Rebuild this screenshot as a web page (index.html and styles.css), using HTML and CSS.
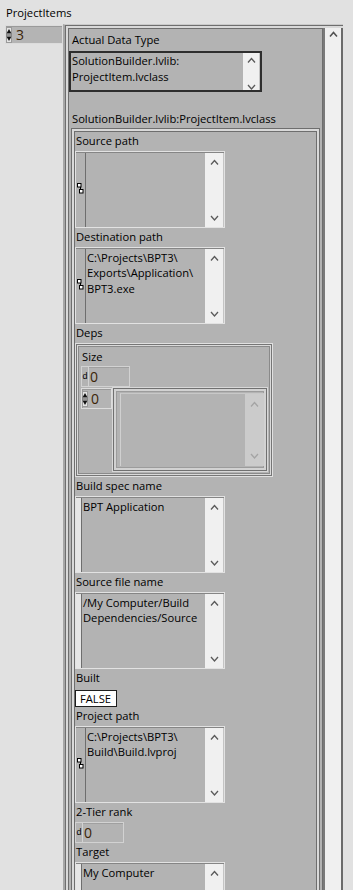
FILE: index.html
```html
<!DOCTYPE html>
<html>
<head>
<meta charset="utf-8">
<link rel="stylesheet" href="styles.css">
</head>
<body>
<div class="panel">
  <div class="title">ProjectItems</div>
  <div class="arr-row">
    <div class="idx idx-main">
      <svg class="spin" width="6" height="16" viewBox="0 0 6 16"><rect x="0.5" y="0.5" width="5" height="15" fill="#e4e4e4" stroke="#9a9a9a"/><path d="M3 2 L5.5 6.5 H0.5 Z" fill="#111"/><path d="M0.5 8 H5.5" stroke="#444"/><path d="M0.5 9.5 H5.5 L3 14 Z" fill="#111"/></svg>
      <span class="digit">3</span>
    </div>
    <div class="array">
      <div class="arr-view">
        <div class="cls">
          <div class="lbl cl">Actual Data Type</div>
          <div class="adt">
            <div class="txt">SolutionBuilder.lvlib:<br>ProjectItem.lvclass</div>
            <div class="sb">
              <svg class="chev" width="9" height="6" viewBox="0 0 9 6"><path d="M1 5.5 L4.5 1.5 L8 5.5" /></svg>
              <svg class="chev" width="9" height="6" viewBox="0 0 9 6"><path d="M1 1 L4.5 5 L8 1" /></svg>
            </div>
          </div>
          <div class="lbl cl priv">SolutionBuilder.lvlib:ProjectItem.lvclass</div>
          <div class="inner">
            <div class="lbl">Source path</div>
            <div class="box">
              <div class="strip-p"><svg width="7" height="11" viewBox="0 0 7 11"><rect x="0.5" y="0.5" width="3.5" height="3.5" fill="#fff" stroke="#000"/><path d="M3.5 4 V7" stroke="#000"/><rect x="2.5" y="6.5" width="3.5" height="3.5" fill="#fff" stroke="#000"/></svg></div>
              <div class="txt"></div>
              <div class="sb">
                <svg class="chev" width="9" height="6" viewBox="0 0 9 6"><path d="M1 5.5 L4.5 1.5 L8 5.5" /></svg>
                <svg class="chev" width="9" height="6" viewBox="0 0 9 6"><path d="M1 1 L4.5 5 L8 1" /></svg>
              </div>
            </div>
            <div class="lbl">Destination path</div>
            <div class="box">
              <div class="strip-p"><svg width="7" height="11" viewBox="0 0 7 11"><rect x="0.5" y="0.5" width="3.5" height="3.5" fill="#fff" stroke="#000"/><path d="M3.5 4 V7" stroke="#000"/><rect x="2.5" y="6.5" width="3.5" height="3.5" fill="#fff" stroke="#000"/></svg></div>
              <div class="txt">C:\Projects\BPT3\<br>Exports\Application\<br>BPT3.exe</div>
              <div class="sb">
                <svg class="chev" width="9" height="6" viewBox="0 0 9 6"><path d="M1 5.5 L4.5 1.5 L8 5.5" /></svg>
                <svg class="chev" width="9" height="6" viewBox="0 0 9 6"><path d="M1 1 L4.5 5 L8 1" /></svg>
              </div>
            </div>
            <div class="lbl">Deps</div>
            <div class="deps">
              <div class="lbl sz">Size</div>
              <div class="num">
                <div class="radix">d</div>
                <div class="disp">0</div>
              </div>
              <div class="deps-row">
                <div class="idx idx-s">
                  <svg class="spin" width="6" height="16" viewBox="0 0 6 16"><rect x="0.5" y="0.5" width="5" height="15" fill="#e4e4e4" stroke="#9a9a9a"/><path d="M3 2 L5.5 6.5 H0.5 Z" fill="#111"/><path d="M0.5 8 H5.5" stroke="#444"/><path d="M0.5 9.5 H5.5 L3 14 Z" fill="#111"/></svg>
                  <span class="digit">0</span>
                </div>
                <div class="earr">
                  <div class="eel">
                    <div class="etxt"></div>
                    <div class="esb">
                      <svg class="chev dim" width="9" height="6" viewBox="0 0 9 6"><path d="M1 5.5 L4.5 1.5 L8 5.5" /></svg>
                      <svg class="chev dim" width="9" height="6" viewBox="0 0 9 6"><path d="M1 1 L4.5 5 L8 1" /></svg>
                    </div>
                  </div>
                </div>
              </div>
            </div>
            <div class="lbl">Build spec name</div>
            <div class="box">
              <div class="strip-s"></div>
              <div class="txt">BPT Application</div>
              <div class="sb">
                <svg class="chev" width="9" height="6" viewBox="0 0 9 6"><path d="M1 5.5 L4.5 1.5 L8 5.5" /></svg>
                <svg class="chev" width="9" height="6" viewBox="0 0 9 6"><path d="M1 1 L4.5 5 L8 1" /></svg>
              </div>
            </div>
            <div class="lbl">Source file name</div>
            <div class="box">
              <div class="strip-s"></div>
              <div class="txt">/My Computer/Build<br>Dependencies/Source</div>
              <div class="sb">
                <svg class="chev" width="9" height="6" viewBox="0 0 9 6"><path d="M1 5.5 L4.5 1.5 L8 5.5" /></svg>
                <svg class="chev" width="9" height="6" viewBox="0 0 9 6"><path d="M1 1 L4.5 5 L8 1" /></svg>
              </div>
            </div>
            <div class="lbl g4">Built</div>
            <div class="bool">FALSE</div>
            <div class="lbl">Project path</div>
            <div class="box">
              <div class="strip-p"><svg width="7" height="11" viewBox="0 0 7 11"><rect x="0.5" y="0.5" width="3.5" height="3.5" fill="#fff" stroke="#000"/><path d="M3.5 4 V7" stroke="#000"/><rect x="2.5" y="6.5" width="3.5" height="3.5" fill="#fff" stroke="#000"/></svg></div>
              <div class="txt">C:\Projects\BPT3\<br>Build\Build.lvproj</div>
              <div class="sb">
                <svg class="chev" width="9" height="6" viewBox="0 0 9 6"><path d="M1 5.5 L4.5 1.5 L8 5.5" /></svg>
                <svg class="chev" width="9" height="6" viewBox="0 0 9 6"><path d="M1 1 L4.5 5 L8 1" /></svg>
              </div>
            </div>
            <div class="lbl">2-Tier rank</div>
            <div class="num">
              <div class="radix">d</div>
              <div class="disp">0</div>
            </div>
            <div class="lbl">Target</div>
            <div class="box">
              <div class="strip-s"></div>
              <div class="txt">My Computer</div>
              <div class="sb">
                <svg class="chev" width="9" height="6" viewBox="0 0 9 6"><path d="M1 5.5 L4.5 1.5 L8 5.5" /></svg>
                <svg class="chev" width="9" height="6" viewBox="0 0 9 6"><path d="M1 1 L4.5 5 L8 1" /></svg>
              </div>
            </div>
            <div class="tail"></div>
          </div>
        </div>
      </div>
      <div class="vscroll">
        <svg class="chev main" width="9" height="6" viewBox="0 0 9 6"><path d="M1 5.5 L4.5 1.5 L8 5.5" /></svg>
      </div>
    </div>
  </div>
</div>
</body>
</html>
```
FILE: styles.css
```css
* { box-sizing: border-box; }
html, body { margin: 0; height: 890px; overflow: hidden; }
body {
  background: #e1e1e1;
  font-family: "Open Sans", "Noto Sans", sans-serif;
  font-size: 11.2px;
  color: #000;
}
.panel { padding-top: 5px; }
.title { height: 16px; line-height: 16px; margin-left: 6px; white-space: nowrap; }
.arr-row { display: flex; align-items: flex-start; margin-top: 3px; }

.idx {
  display: flex;
  align-items: center;
  background: #b4b4b4;
  border: 1px solid #dcdcdc;
  box-shadow: inset 1px 1px 0 #9a9a9a;
  flex: none;
}
.idx-main { margin-left: 5px; margin-top: 1px; width: 58px; height: 19px; }
.idx-s { width: 31px; height: 21px; margin-top: 1px; }
.spin { display: block; flex: none; }
.digit {
  font-size: 14px;
  line-height: 1;
  color: #3b2508;
  margin-left: 4px;
}
.idx-s .digit { margin-left: 3px; }

.array {
  display: flex;
  width: 280px;
  min-height: 870px;
  flex: none;
  border-top: 1px solid #cacaca;
  border-left: 2px solid #a6a6a6;
  box-shadow: inset 1px 1px 0 #6e6e6e, inset 3px 3px 0 #d9d9d9;
  padding: 3px 0 0 3px;
}
.arr-view { flex: 1; min-width: 0; }
.vscroll {
  width: 20px;
  flex: none;
  background: #f0f0f0;
  border-left: 2px solid #7a7a7a;
  border-right: 2px solid #6a6a6a;
  padding-top: 3px;
  display: flex;
  justify-content: center;
  align-items: flex-start;
}

.cls {
  border: 1px solid #6e6e6e;
  background: #b3b3b3;
  padding-top: 2px;
}
.lbl {
  height: 16px;
  line-height: 16px;
  margin: 1px 0 2px;
  padding-left: 1px;
  white-space: nowrap;
}
.lbl.cl { padding-left: 3px; margin-bottom: 3px; }
.lbl.priv { margin-top: 19px; margin-bottom: 1px; }
.lbl.g4 { margin-bottom: 4px; }
.lbl.sz { margin-bottom: 1px; }

.adt {
  width: 193px;
  height: 41px;
  border: 2px solid #2e2e2e;
  display: flex;
}
.adt .txt { flex: 1; padding-left: 1px; line-height: 16px; white-space: nowrap; overflow: hidden; }
.adt .sb {
  width: 17px;
  background: #f0f0f0;
  padding: 4px 0 0;
  display: flex;
  flex-direction: column;
  justify-content: space-between;
  align-items: center;
  overflow: hidden;
}

.inner {
  margin: 0 2px 0 2px;
  border: 1px solid #6e6e6e;
  box-shadow: inset 0 0 0 2px #d9d9d9, inset 0 0 0 3px #6e6e6e;
  padding: 3px 0 0 3px;
}
.tail { height: 40px; }

.box {
  width: 150px;
  height: 77px;
  display: flex;
  border: 1px solid #e2e2e2;
  padding-top: 1px;
  box-shadow: inset 0 1px 0 #858585;
}
.strip-p { width: 9px; flex: none; display: flex; align-items: center; justify-content: center; }
.strip-p svg { display: block; margin-top: -3px; }
.strip-s { width: 5px; flex: none; background: #e6e6e6; }
.box .txt {
  flex: 1;
  min-width: 0;
  border-left: 1px solid #6e6e6e;
  padding: 0.5px 0 0 1px;
  line-height: 15.5px;
  white-space: nowrap;
  overflow: hidden;
}
.sb {
  width: 19px;
  flex: none;
  background: #f0f0f0;
  border-right: 1px solid #c4c4c4;
  display: flex;
  flex-direction: column;
  align-items: center;
  justify-content: space-between;
  padding: 6px 0;
}
.chev { display: block; flex: none; }
.chev path { fill: none; stroke: #5a5a5a; stroke-width: 1.3; }
.chev.dim path { stroke: #a4a4a4; }
.chev.main path { stroke: #505050; stroke-width: 1.5; }

.num {
  width: 49px;
  height: 21px;
  display: flex;
  border: 1px solid #d2d2d2;
}
.radix {
  width: 6px;
  flex: none;
  font-family: "Liberation Sans", sans-serif;
  font-size: 9px;
  line-height: 19px;
  text-align: center;
}
.disp {
  flex: 1;
  border-left: 1px solid #d2d2d2;
  box-shadow: inset 0 1px 0 #a0a0a0;
  padding-left: 1px;
  font-size: 14px;
  line-height: 19px;
  color: #3b2508;
}

.bool {
  width: 42px;
  height: 17px;
  border: 1px solid #1e1e1e;
  background: #fff;
  padding-left: 4px;
  line-height: 15px;
}

.deps {
  width: 198px;
  border: 1px solid #e0e0e0;
  box-shadow: inset 0 0 0 1px #767676, inset 0 0 0 2px #dadada, inset 0 0 0 3px #8a8a8a;
  padding: 4px 4px 4px 5px;
}
.deps-row { display: flex; align-items: flex-start; }
.earr {
  flex: 1;
  height: 85px;
  display: flex;
  border: 1px solid #d8d8d8;
  box-shadow: inset 0 0 0 1px #707070, inset 0 0 0 3px #d2d2d2, inset 0 0 0 4px #9c9c9c;
  padding: 5px 3px 5px 7px;
}
.eel {
  flex: 1;
  display: flex;
  border-left: 1px solid #d0d0d0;
  border-top: 1px solid #c8c8c8;
}
.etxt { flex: 1; }
.esb {
  width: 19px;
  background: #cbcbcb;
  display: flex;
  flex-direction: column;
  justify-content: space-between;
  align-items: center;
  padding: 7px 0;
}
```
